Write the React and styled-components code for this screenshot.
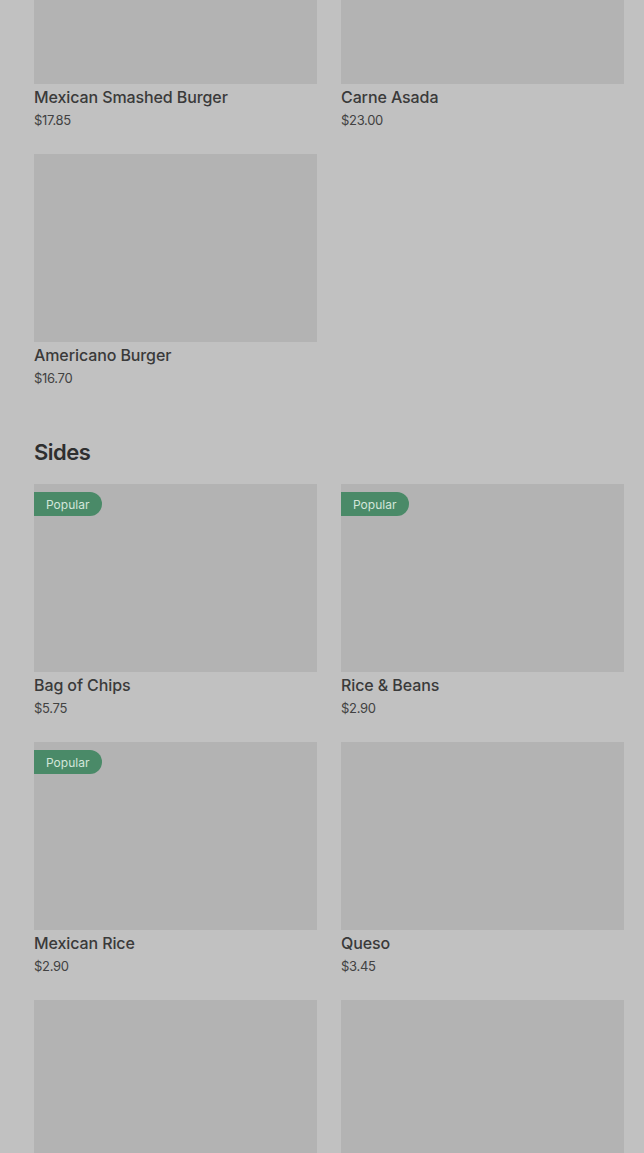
import React from "react";
import styled, { createGlobalStyle } from "styled-components";

const Global = createGlobalStyle`
  html, body { margin: 0; padding: 0; background: #c1c1c1; overflow: hidden; }
  body { font-family: Inter, "Noto Sans", sans-serif; }
`;

const Page = styled.div`
  padding: 0 20px 0 34px;
  margin-top: -104px;
  display: flex;
  flex-direction: column;
`;

const Section = styled.section`
  display: flex;
  flex-direction: column;
  & + & { margin-top: 51px; }
`;

const Heading = styled.h2`
  margin: 0 0 18px;
  font-size: 22px;
  line-height: 28px;
  font-weight: 600;
  letter-spacing: -0.5px;
  color: #2f2f2f;
`;

const Grid = styled.div`
  display: grid;
  grid-template-columns: 283px 283px;
  column-gap: 24px;
  row-gap: 25px;
`;

const Card = styled.div`
  display: flex;
  flex-direction: column;
`;

const Thumb = styled.div`
  position: relative;
  height: 188px;
  background: #b3b3b3;
`;

const Badge = styled.span`
  position: absolute;
  left: 0;
  top: 8px;
  height: 24px;
  padding: 0 13px 0 12px;
  display: flex;
  align-items: center;
  background: #4a8a68;
  color: #d3e6da;
  font-size: 12px;
  border-radius: 0 12px 12px 0;
`;

const Title = styled.div`
  margin-top: 3px;
  font-size: 16px;
  line-height: 20px;
  font-weight: 500;
  letter-spacing: -0.1px;
  color: #3a3a3a;
`;

const Price = styled.div`
  margin-top: 4px;
  font-size: 13px;
  line-height: 18px;
  color: #424242;
  letter-spacing: -0.3px;
`;

const Item = ({ name, price, popular }) => (
  <Card>
    <Thumb>{popular && <Badge>Popular</Badge>}</Thumb>
    <Title>{name}</Title>
    <Price>{price}</Price>
  </Card>
);

const burgers = [
  { name: "Mexican Smashed Burger", price: "$17.85" },
  { name: "Carne Asada", price: "$23.00" },
  { name: "Americano Burger", price: "$16.70" },
];

const sides = [
  { name: "Bag of Chips", price: "$5.75", popular: true },
  { name: "Rice & Beans", price: "$2.90", popular: true },
  { name: "Mexican Rice", price: "$2.90", popular: true },
  { name: "Queso", price: "$3.45" },
];

export default function App() {
  return (
    <>
      <Global />
      <Page>
        <Section>
          <Grid>
            {burgers.map((b) => (
              <Item key={b.name} {...b} />
            ))}
          </Grid>
        </Section>
        <Section>
          <Heading>Sides</Heading>
          <Grid>
            {sides.map((s) => (
              <Item key={s.name} {...s} />
            ))}
            <Thumb />
            <Thumb />
          </Grid>
        </Section>
      </Page>
    </>
  );
}
